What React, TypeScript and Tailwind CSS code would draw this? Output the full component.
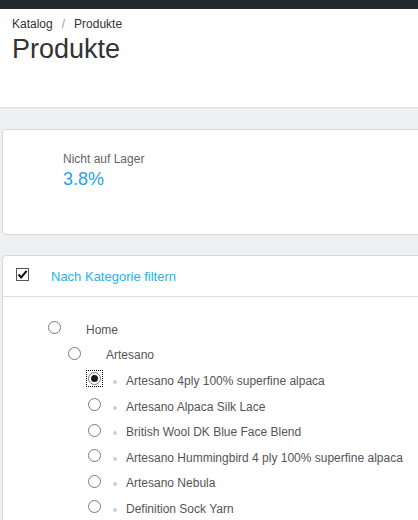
import React from 'react';

type Node = { label: string; level: number; leaf?: boolean; checked?: boolean };

const tree: Node[] = [
  { label: 'Home', level: 0 },
  { label: 'Artesano', level: 1 },
  { label: 'Artesano 4ply 100% superfine alpaca', level: 2, leaf: true, checked: true },
  { label: 'Artesano Alpaca Silk Lace', level: 2, leaf: true },
  { label: 'British Wool DK Blue Face Blend', level: 2, leaf: true },
  { label: 'Artesano Hummingbird 4 ply 100% superfine alpaca', level: 2, leaf: true },
  { label: 'Artesano Nebula', level: 2, leaf: true },
  { label: 'Definition Sock Yarn', level: 2, leaf: true },
];

const Radio: React.FC<{ checked?: boolean }> = ({ checked }) => (
  <span
    className={`shrink-0 mb-[4px] flex items-center justify-center ${
      checked ? 'outline outline-1 outline-dotted outline-black outline-offset-[1px]' : ''
    }`}
  >
    <span className="w-[13px] h-[13px] rounded-full border border-[#7a7a7a] bg-white flex items-center justify-center">
      {checked && <span className="w-[7px] h-[7px] rounded-full bg-[#1a1a1a]" />}
    </span>
  </span>
);

export default function App() {
  return (
    <div className="min-h-screen bg-[#eff0f2] font-['Liberation_Sans',Arial,sans-serif] overflow-hidden">
      {/* Header */}
      <div className="bg-white border-b border-[#dcdee0]">
        <div className="h-[9px] bg-[#26292e]" />
        <div className="h-[98px] px-[12px] pt-[8px]">
          <div className="flex items-center text-[12px] leading-[1.2] text-[#333]">
            <span>Katalog</span>
            <span className="px-[9px] text-[#999]">/</span>
            <span>Produkte</span>
          </div>
          <h1 className="mt-[4px] text-[27px] leading-[1.1] text-[#333]">Produkte</h1>
        </div>
      </div>

      {/* KPI card */}
      <div className="ml-[2px] mr-[-10px] mt-[21px] h-[106px] bg-white border border-[#d6d9dc] rounded-[4px] pl-[60px] pt-[22px]">
        <p className="text-[12px] leading-[1.2] text-[#666]">Nicht auf Lager</p>
        <p className="mt-[3px] text-[18px] leading-[1.2] text-[#27a2e3]">3.8%</p>
      </div>

      {/* Category filter */}
      <div className="ml-[2px] mr-[-10px] mt-[20px] bg-white border border-[#d6d9dc] rounded-[4px]">
        <div className="h-[41px] flex items-start pt-[11px] pl-[13px] border-b border-[#dcdee0]">
          <span className="mt-[1px] w-[13px] h-[13px] border border-[#555] bg-white flex items-center justify-center shrink-0">
            <svg width="11" height="11" viewBox="0 0 11 11">
              <path d="M1.5 5.5 L4.2 8.5 L9.6 1.8" fill="none" stroke="#111" strokeWidth="2" />
            </svg>
          </span>
          <span className="ml-[22px] pt-[2px] text-[13px] leading-[1.2] text-[#1fb2ec]">Nach Kategorie filtern</span>
        </div>

        <div className="pt-[20px] pb-[20px] pl-[45px]">
          {tree.map((n) => (
            <div
              key={n.label}
              className="h-[25.6px] flex items-center text-[12px] text-[#555] whitespace-nowrap"
              style={{ paddingLeft: n.level * 20 }}
            >
              <Radio checked={n.checked} />
              {n.leaf ? (
                <>
                  <span className="ml-[12px] mt-[2px] w-[4px] h-[4px] rounded-full bg-[#cfcfcf] shrink-0" />
                  <span className="ml-[9px]">{n.label}</span>
                </>
              ) : (
                <span className="ml-[25px]">{n.label}</span>
              )}
            </div>
          ))}
        </div>
      </div>
    </div>
  );
}
